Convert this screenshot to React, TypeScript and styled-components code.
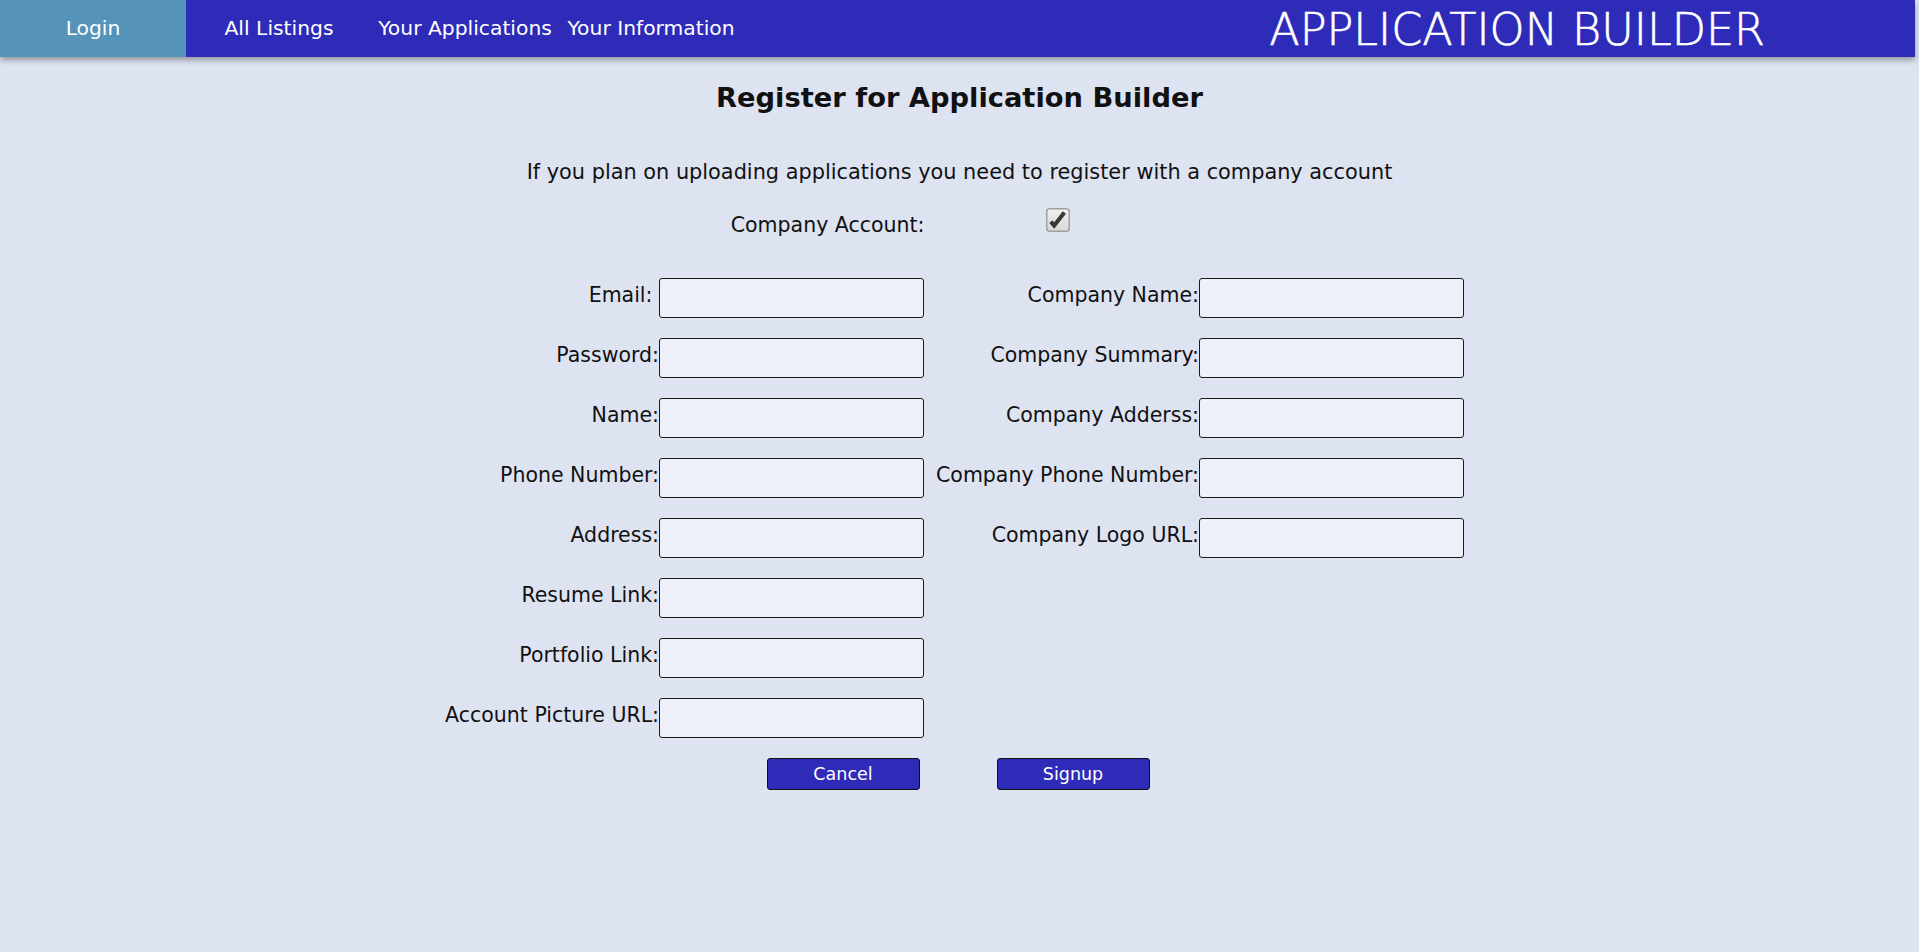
import { useState } from "react";
import styled, { createGlobalStyle } from "styled-components";

const GlobalStyle = createGlobalStyle`
  html, body {
    margin: 0;
    padding: 0;
  }
  body {
    background: #dee3f1;
    font-family: "DejaVu Sans", "Liberation Sans", sans-serif;
    color: #111;
  }
  * {
    box-sizing: border-box;
  }
`;

const navItems = ["Login", "All Listings", "Your Applications", "Your Information"];

const leftFields = [
  "Email:\u00a0",
  "Password:",
  "Name:",
  "Phone Number:",
  "Address:",
  "Resume Link:",
  "Portfolio Link:",
  "Account Picture URL:",
];

const companyFields = [
  "Company Name:",
  "Company Summary:",
  "Company Adderss:",
  "Company Phone Number:",
  "Company Logo URL:",
];

export default function App() {
  const [isCompany, setIsCompany] = useState(true);

  return (
    <>
      <GlobalStyle />
      <NavBar>
        {navItems.map((item, i) => (
          <NavItem key={item} $active={i === 0}>
            {item}
          </NavItem>
        ))}
        <Brand>APPLICATION BUILDER</Brand>
      </NavBar>

      <Main>
        <Title>Register for Application Builder</Title>
        <Intro>
          If you plan on uploading applications you need to register with a
          company account
        </Intro>

        <AccountToggle>
          <ToggleLabel>Company Account:</ToggleLabel>
          <CheckBox
            type="button"
            role="checkbox"
            aria-checked={isCompany}
            onClick={() => setIsCompany(!isCompany)}
          >
            <svg width="24" height="24" viewBox="0 0 24 24">
              <defs>
                <linearGradient id="cb" x1="0" y1="0" x2="0" y2="1">
                  <stop offset="0" stopColor="#f0f0f0" />
                  <stop offset="1" stopColor="#d8d8d8" />
                </linearGradient>
              </defs>
              <rect
                x="0.75"
                y="0.75"
                width="22.5"
                height="22.5"
                rx="3"
                fill="url(#cb)"
                stroke="#a0a0a0"
                strokeWidth="1.5"
              />
              {isCompany && (
                <path
                  d="M4.8 13.6 L8.2 17.6 L18.4 4.6"
                  fill="none"
                  stroke="#383838"
                  strokeWidth="4"
                  strokeLinejoin="miter"
                />
              )}
            </svg>
          </CheckBox>
        </AccountToggle>

        <Form>
          <Column $labelWidth={216}>
            {leftFields.map((label) => (
              <Field key={label}>
                <Label>{label}</Label>
                <Input type="text" />
              </Field>
            ))}
          </Column>
          {isCompany && (
            <Column $labelWidth={275}>
              {companyFields.map((label) => (
                <Field key={label}>
                  <Label>{label}</Label>
                  <Input type="text" />
                </Field>
              ))}
            </Column>
          )}
        </Form>

        <Actions>
          <Button type="button">Cancel</Button>
          <Button type="submit">Signup</Button>
        </Actions>
      </Main>
    </>
  );
}

const NavBar = styled.nav`
  display: flex;
  align-items: stretch;
  height: 57px;
  width: calc(100% - 4px);
  background: #2f2bb9;
  box-shadow: 0 3px 6px rgba(0, 0, 0, 0.35);
`;

const NavItem = styled.a<{ $active?: boolean }>`
  display: flex;
  align-items: center;
  justify-content: center;
  width: 186px;
  padding-bottom: 2px;
  color: #fff;
  font-size: 20.3px;
  white-space: nowrap;
  cursor: pointer;
  background: ${(p) => (p.$active ? "#5593b8" : "transparent")};
`;

const Brand = styled.div`
  margin-left: auto;
  margin-right: 150px;
  align-self: center;
  padding-top: 2px;
  color: #fff;
  font-size: 44.5px;
  font-weight: 200;
  -webkit-text-stroke: 0.6px #fff;
  white-space: nowrap;
`;

const Main = styled.main`
  display: flex;
  flex-direction: column;
  align-items: center;
  padding-top: 24px;
`;

const Title = styled.h1`
  margin: 0;
  font-size: 27.3px;
  line-height: 34px;
  font-weight: bold;
`;

const Intro = styled.p`
  margin: 44.5px 0 0;
  font-size: 20.85px;
  line-height: 25px;
`;

const AccountToggle = styled.div`
  display: grid;
  grid-template-columns: 1fr 1fr;
  align-items: start;
  width: 100%;
  margin-top: 23px;
`;

const ToggleLabel = styled.label`
  justify-self: end;
  margin-top: 5px;
  padding-right: 35px;
  font-size: 20.5px;
  line-height: 25px;
`;

const CheckBox = styled.button`
  justify-self: start;
  width: 24px;
  height: 24px;
  margin-left: 86px;
  padding: 0;
  border: none;
  background: none;
  cursor: pointer;
  svg {
    display: block;
  }
`;

const Form = styled.form`
  display: flex;
  align-items: flex-start;
  justify-content: center;
  width: 100%;
  margin-top: 40px;
  padding-right: 12px;
`;

const Column = styled.div<{ $labelWidth: number }>`
  display: grid;
  grid-template-columns: ${(p) => p.$labelWidth}px 265px;
  row-gap: 20px;
`;

const Field = styled.div`
  display: contents;
`;

const Label = styled.label`
  align-self: center;
  padding-bottom: 4px;
  text-align: right;
  font-size: 20.5px;
  line-height: 25px;
  white-space: pre;
`;

const Input = styled.input`
  width: 265px;
  height: 40px;
  margin: 0;
  padding: 0 8px;
  border: 1px solid #1a1a1a;
  border-radius: 3px;
  background: #edf0f8;
  font-family: inherit;
  font-size: 18px;
  outline: none;
`;

const Actions = styled.div`
  display: flex;
  justify-content: center;
  gap: 77px;
  margin-top: 20px;
  padding-right: 3px;
`;

const Button = styled.button`
  width: 153px;
  height: 32px;
  border: 1px solid #111;
  border-radius: 3px;
  background: #2f2bb9;
  color: #fff;
  font-family: inherit;
  font-size: 17.5px;
  cursor: pointer;
`;
